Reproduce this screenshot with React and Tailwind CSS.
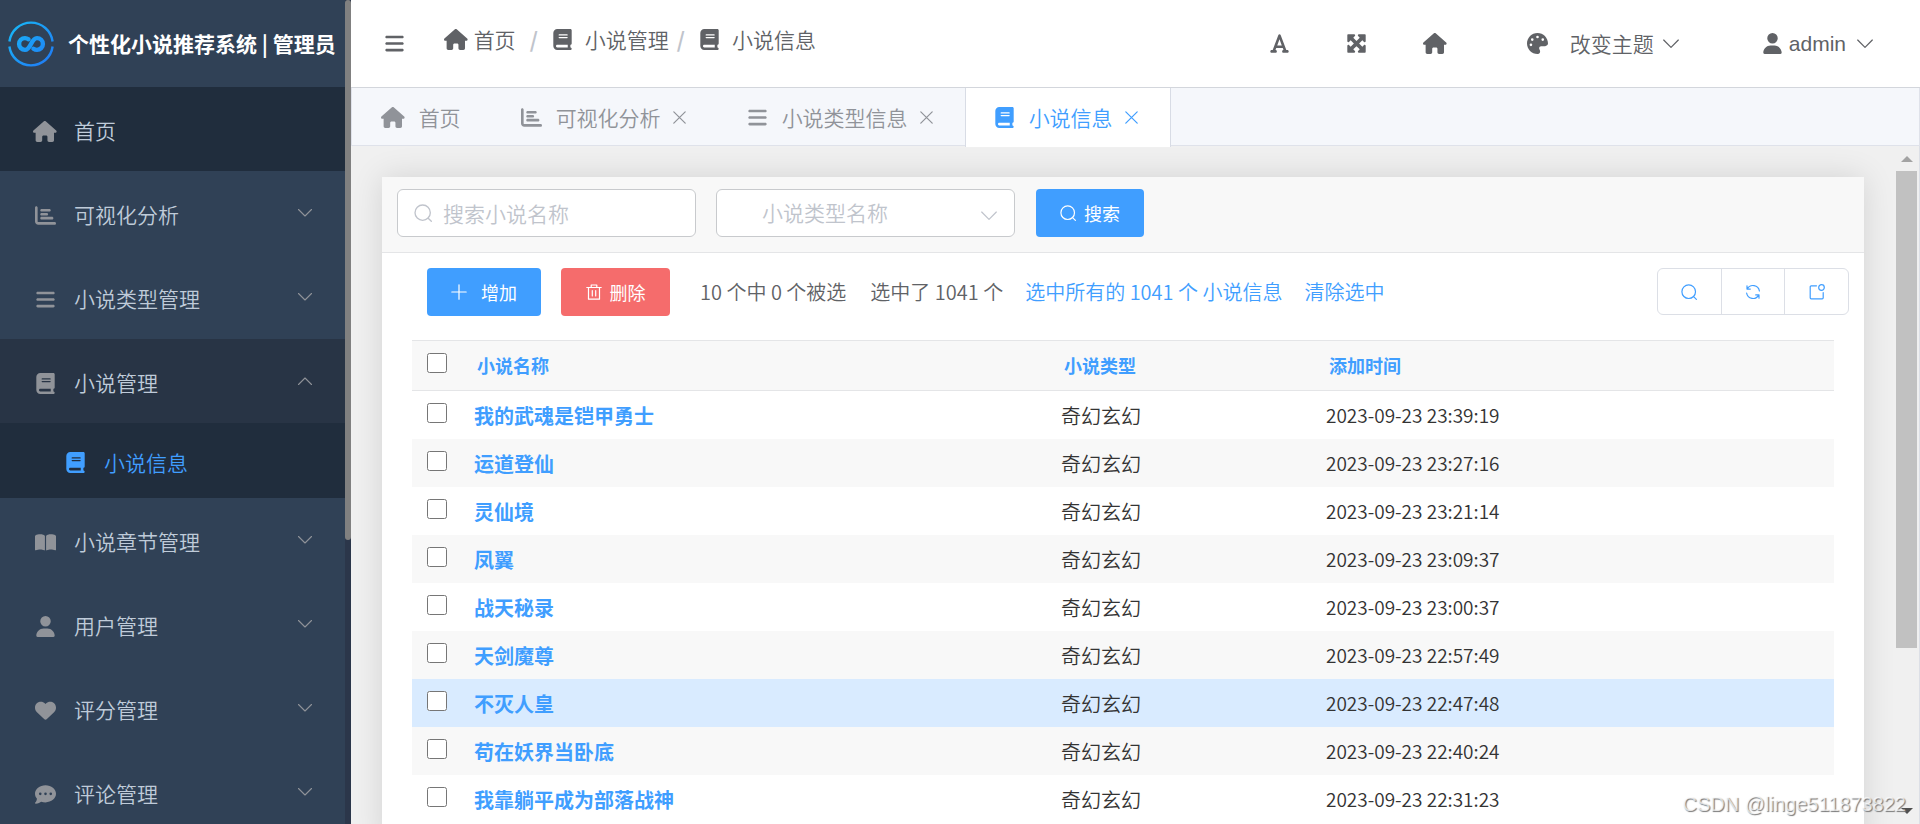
import React from "react";
import {
  FaBars,
  FaBook,
  FaBookOpen,
  FaChartBar,
  FaCommentDots,
  FaFont,
  FaHeart,
  FaMaximize,
  FaPalette,
  FaUser,
} from "react-icons/fa6";

const HouseIcon = ({ className }) => (
  <svg viewBox="0 0 576 512" className={className} fill="currentColor" aria-hidden="true">
    <path d="M575.8 255.5c0 18-15 32.1-32 32.1h-32l.7 160.2c0 2.7-.2 5.4-.5 8.1V472c0 22.1-17.9 40-40 40H392c-22.1 0-40-17.9-40-40v-88c0-17.700-14.300-32-32-32h-64c-17.700 0-32 14.300-32 32v88c0 22.100-17.900 40-40 40h-80c-22.100 0-40-17.900-40-40V287.600H32c-18 0-32-14-32-32.100c0-9 3-17 10-24L266.400 8c7-7 15-8 22-8s15 2 21 7L564.800 231.500c8 7 12 15 11 24z" />
  </svg>
);

const menus = [
  { name: "首页", icon: HouseIcon, active: true },
  { name: "可视化分析", icon: FaChartBar },
  { name: "小说类型管理", icon: FaBars },
  { name: "小说管理", icon: FaBook, open: true, children: ["小说信息"] },
  { name: "小说章节管理", icon: FaBookOpen },
  { name: "用户管理", icon: FaUser },
  { name: "评分管理", icon: FaHeart },
  { name: "评论管理", icon: FaCommentDots },
];

const tabs = [
  { name: "首页", icon: HouseIcon },
  { name: "可视化分析", icon: FaChartBar, closable: true },
  { name: "小说类型信息", icon: FaBars, closable: true },
  { name: "小说信息", icon: FaBook, closable: true, active: true },
];

const crumbs = [
  { name: "首页", icon: HouseIcon, gap: "gap-1.5" },
  { name: "小说管理", icon: FaBook, gap: "gap-3" },
  { name: "小说信息", icon: FaBook, gap: "gap-3" },
];

const novels = [
  { name: "我的武魂是铠甲勇士", type: "奇幻玄幻", time: "2023-09-23 23:39:19" },
  { name: "运道登仙", type: "奇幻玄幻", time: "2023-09-23 23:27:16" },
  { name: "灵仙境", type: "奇幻玄幻", time: "2023-09-23 23:21:14" },
  { name: "凤翼", type: "奇幻玄幻", time: "2023-09-23 23:09:37" },
  { name: "战天秘录", type: "奇幻玄幻", time: "2023-09-23 23:00:37" },
  { name: "天剑魔尊", type: "奇幻玄幻", time: "2023-09-23 22:57:49" },
  { name: "不灭人皇", type: "奇幻玄幻", time: "2023-09-23 22:47:48", hover: true },
  { name: "苟在妖界当卧底", type: "奇幻玄幻", time: "2023-09-23 22:40:24" },
  { name: "我靠躺平成为部落战神", type: "奇幻玄幻", time: "2023-09-23 22:31:23" },
];

const Stroke = ({ className, width = 1.2, children }) => (
  <svg
    viewBox="0 0 16 16"
    className={className}
    fill="none"
    stroke="currentColor"
    strokeWidth={width}
    strokeLinecap="round"
    strokeLinejoin="round"
    aria-hidden="true"
  >
    {children}
  </svg>
);

const Chevron = ({ className, up }) => (
  <Stroke className={className} width={1.1}>
    <path d={up ? "M1.5 11.5 8 5l6.5 6.5" : "M1.5 4.5 8 11l6.5-6.5"} />
  </Stroke>
);

const SearchIcon = ({ className }) => (
  <Stroke className={className}>
    <circle cx="7.7" cy="7.7" r="6.8" />
    <path d="m12.6 12.6 2.8 2.8" />
  </Stroke>
);

const CloseIcon = ({ className }) => (
  <Stroke className={className} width={1.5}>
    <path d="m1 1 14 14M15 1 1 15" />
  </Stroke>
);

const Logo = () => (
  <svg viewBox="0 0 46 46" className="h-[46px] w-[46px] shrink-0" fill="none" aria-hidden="true">
    <defs>
      <linearGradient id="logo" x1="0" y1="0" x2="46" y2="46" gradientUnits="userSpaceOnUse">
        <stop offset="0" stopColor="#17bcf7" />
        <stop offset="1" stopColor="#2176f5" />
      </linearGradient>
    </defs>
    <path d="M1.4 20.5a21.8 21.8 0 0 1 43.2 0M1.4 25.5a21.8 21.8 0 0 0 43.2 0" stroke="url(#logo)" strokeWidth="2.4" />
    <path
      d="M20.5 18.3c-1.1-.8-2.2-1.2-3.5-1.2a5.9 5.9 0 0 0 0 11.8c6.2 0 5.8-11.8 12-11.8a5.9 5.9 0 0 1 0 11.8c-1.3 0-2.4-.4-3.5-1.2"
      stroke="url(#logo)"
      strokeWidth="4.4"
      strokeLinecap="round"
    />
  </svg>
);

const Sidebar = () => (
  <aside className="flex w-[351px] shrink-0 bg-[#2b364a] text-[21px]">
    <div className="min-w-0 flex-1 overflow-hidden bg-[#304156]">
      <div className="flex h-[87px] items-center gap-3.5 pl-2 text-white">
        <Logo />
        <h1 className="whitespace-nowrap font-bold">个性化小说推荐系统 | 管理员</h1>
      </div>
      <nav className="text-[#bfcbd9]">
        {menus.map(({ name, icon: Icon, active, open, children }) => (
          <div key={name}>
            <button
              className={`flex h-[84px] w-full items-center pl-[30px] pr-8 ${
                active ? "bg-[#202d3d]" : open ? "bg-[#283445]" : ""
              }`}
            >
              <span className="flex items-center pt-1">
                <span className="mr-3.5 flex w-[30px] justify-center text-[#909399]">
                  <Icon className="h-[21px] w-auto" />
                </span>
                {name}
              </span>
              {!active && <Chevron up={open} className="ml-auto h-4 w-4 text-[#909399]" />}
            </button>
            {children?.map((child) => (
              <a key={child} href="#" className="flex h-[75px] items-center bg-[#202d3d] pl-[65px] pt-1 text-[#409eff]">
                <FaBook className="mr-[18px] h-[21px] w-auto" />
                {child}
              </a>
            ))}
          </div>
        ))}
      </nav>
    </div>
    <div className="w-1.5">
      <div className="h-[540px] rounded-full bg-[#808080]" />
    </div>
  </aside>
);

const Header = () => (
  <header className="flex h-[88px] shrink-0 items-center border-b border-[#d3d6dc] bg-white pl-[33px] pr-[46px] text-[21px] text-[#606266]">
    <button aria-label="折叠菜单">
      <FaBars className="h-[21px] w-auto" />
    </button>
    <nav className="ml-[39px] flex items-center pb-2">
      {crumbs.map(({ name, icon: Icon, gap }, i) => (
        <React.Fragment key={name}>
          {i > 0 && <span className={`font-bold text-[#c0c4cc] ${i === 1 ? "mx-3.5" : "ml-2 mr-3.5"}`}>/</span>}
          <a href="#" className={`flex items-center ${gap}`}>
            <Icon className="h-[21px] w-auto" />
            {name}
          </a>
        </React.Fragment>
      ))}
    </nav>
    <div className="ml-auto flex items-center">
      <button aria-label="字体">
        <FaFont className="h-[21px] w-auto" />
      </button>
      <button aria-label="全屏" className="ml-14">
        <FaMaximize className="h-[21px] w-auto" />
      </button>
      <button aria-label="主页" className="ml-14">
        <HouseIcon className="h-[21px] w-auto" />
      </button>
      <button className="ml-20 flex items-center">
        <FaPalette className="mr-[22px] h-[21px] w-auto" />
        改变主题
        <Chevron className="ml-2 h-[18px] w-[18px]" />
      </button>
      <button className="ml-[82px] flex items-center font-['Liberation_Sans',sans-serif]">
        <FaUser className="mr-1.5 h-[21px] w-auto" />
        admin
        <Chevron className="ml-2.5 h-[18px] w-[18px]" />
      </button>
    </div>
  </header>
);

const Tabs = () => (
  <div className="flex h-[58px] shrink-0 border-b border-l border-r border-[#dfe2ea] bg-[#f5f7fb] text-[21px] text-[#909399]">
    {tabs.map(({ name, icon: Icon, closable, active }) => (
      <div
        key={name}
        className={`flex items-center pt-0.5 ${closable ? "pr-8" : "pr-[31px]"} ${
          active ? "-mb-0.5 border-l border-r border-[#d8dce5] bg-white pb-0.5 pl-7 text-[#409eff]" : "pl-[29px]"
        }`}
      >
        <button className="flex items-center gap-3.5">
          <Icon className="h-[21px] w-auto" />
          {name}
        </button>
        {closable && (
          <button aria-label={`关闭${name}`} className="ml-3">
            <CloseIcon className="h-[13px] w-[13px]" />
          </button>
        )}
      </div>
    ))}
  </div>
);

const Filters = () => (
  <form className="flex h-[76px] items-start border-b border-[#e4e5e7] bg-[#f8f8f8] pl-[15px] pt-3">
    <label className="relative">
      <SearchIcon className="absolute left-[17px] top-[15px] h-[18px] w-[18px] text-[#c0c4cc]" />
      <input
        type="text"
        aria-label="搜索小说名称"
        placeholder="搜索小说名称"
        className="h-12 w-[299px] rounded-md border border-[#c8cacd] bg-white pl-[45px] text-[21px] placeholder:text-[#c0c4cc]"
      />
    </label>
    <label className="relative ml-5">
      <select
        aria-label="小说类型名称"
        className="h-12 w-[299px] appearance-none rounded-md border border-[#c8cacd] bg-white pl-[45px] text-[21px] text-[#c0c4cc]"
      >
        <option>小说类型名称</option>
      </select>
      <Chevron className="absolute right-[17px] top-[18px] h-[18px] w-[18px] text-[#c0c4cc]" />
    </label>
    <button
      type="button"
      className="ml-[21px] flex h-12 w-[108px] items-center justify-center gap-2 rounded bg-[#409eff] text-lg font-normal text-white"
    >
      <SearchIcon className="h-4 w-4" />
      搜索
    </button>
  </form>
);

const Toolbar = () => (
  <div className="flex items-center pl-[45px] pr-[15px] pt-[15px] text-xl text-[#606266]">
    <button className="flex h-12 w-[114px] items-center justify-center gap-3.5 rounded bg-[#409eff] text-lg font-normal text-white">
      <Stroke className="h-4 w-4">
        <path d="M8 .8v14.4M.8 8h14.4" />
      </Stroke>
      增加
    </button>
    <button className="ml-5 flex h-12 w-[109px] items-center justify-center gap-2 rounded bg-[#f56c6c] text-lg font-normal text-white">
      <Stroke className="h-4 w-4">
        <path d="M.8 3.5h14.4M5.2 3.5V1h5.6v2.5M2.5 3.5v11.7h11V3.5M6.3 6.5V12M9.7 6.5V12" />
      </Stroke>
      删除
    </button>
    <span className="ml-[30px]">10 个中 0 个被选</span>
    <span className="ml-6">选中了 1041 个</span>
    <a href="#" className="ml-[22px] text-[#409eff]">
      选中所有的 1041 个 小说信息
    </a>
    <a href="#" className="ml-[22px] text-[#409eff]">
      清除选中
    </a>
    <div className="mb-px ml-auto flex h-[47px] w-48 divide-x divide-[#dcdfe6] rounded-md border border-[#dcdfe6] text-[#409eff]">
      <button aria-label="搜索" className="flex flex-1 items-center justify-center">
        <SearchIcon className="h-4 w-4" />
      </button>
      <button aria-label="刷新" className="flex flex-1 items-center justify-center">
        <Stroke className="h-4 w-4">
          <path d="M2.3 4.9A6.5 6.5 0 0 1 14.4 7M13.7 11.1A6.5 6.5 0 0 1 1.6 9M2 1.8v3.3h3.3M14 14.2v-3.3h-3.3" />
        </Stroke>
      </button>
      <button aria-label="导出" className="flex flex-1 items-center justify-center">
        <Stroke className="h-4 w-4">
          <path d="M7.5 1.8H2.2a1 1 0 0 0-1 1v11a1 1 0 0 0 1 1h11a1 1 0 0 0 1-1V8.5" />
          <circle cx="12.5" cy="3.5" r="2.8" />
        </Stroke>
      </button>
    </div>
  </div>
);

const NovelTable = () => (
  <table className="w-full table-fixed border-collapse text-left text-xl text-[#333]">
    <colgroup>
      <col className="w-[62px]" />
      <col className="w-[587px]" />
      <col className="w-[265px]" />
      <col />
    </colgroup>
    <thead>
      <tr className="h-[50px] border-y border-[#e4e5e7] bg-[#f8f8f8] text-lg text-[#409eff]">
        <th className="pl-[15px] pt-3 align-top">
          <input type="checkbox" aria-label="全选" className="block h-5 w-5" />
        </th>
        <th className="pb-0.5 pl-[3px]">小说名称</th>
        <th className="pb-0.5 pl-[3px]">小说类型</th>
        <th className="pb-0.5 pl-[3px]">添加时间</th>
      </tr>
    </thead>
    <tbody>
      {novels.map(({ name, type, time, hover }) => (
        <tr key={name} className={`h-12 ${hover ? "bg-[#d9ebff]" : "even:bg-[#f8f8f8]"}`}>
          <td className="pl-[15px] pt-3 align-top">
            <input type="checkbox" aria-label={name} className="block h-5 w-5" />
          </td>
          <td className="pt-0.5">
            <a href="#" className="font-bold text-[#409eff]">
              {name}
            </a>
          </td>
          <td className="pt-0.5">{type}</td>
          <td className="pt-0.5 text-[19px]">{time}</td>
        </tr>
      ))}
    </tbody>
  </table>
);

const Scrollbar = () => (
  <div className="flex w-6 shrink-0 flex-col items-center border-r border-[#dcdfe6] pr-0.5">
    <svg viewBox="0 0 12 6" className="mt-2.5 h-1.5 w-3 fill-[#a3a3a3]" aria-hidden="true">
      <path d="M6 0 12 6H0z" />
    </svg>
    <div className="mt-[9px] h-[477px] w-[21px] bg-[#c1c1c1]" />
    <svg viewBox="0 0 12 6" className="mb-2.5 mt-auto h-1.5 w-3 fill-[#505050]" aria-hidden="true">
      <path d="M0 0h12L6 6z" />
    </svg>
  </div>
);

const App = () => {
  return (
    <div className="relative flex h-screen overflow-hidden bg-[#f0f0f0] font-['Noto_Sans_CJK_SC',sans-serif] font-[350]">
      <Sidebar />
      <div className="flex min-w-0 flex-1 flex-col">
        <Header />
        <Tabs />
        <div className="flex min-h-0 flex-1">
          <main className="min-w-0 flex-1 overflow-hidden pl-[31px] pr-8 pt-[31px]">
            <div className="bg-white shadow-[0_0_30px_rgba(0,0,0,0.12)]">
              <Filters />
              <Toolbar />
              <div className="px-[30px] pb-6 pt-6">
                <NovelTable />
              </div>
            </div>
          </main>
          <Scrollbar />
        </div>
      </div>
      <span className="absolute bottom-1.5 right-3.5 font-['Liberation_Sans',sans-serif] text-xl text-white/70 [text-shadow:1px_1px_1px_#777]">
        CSDN @linge511873822
      </span>
    </div>
  );
};

export default App;
